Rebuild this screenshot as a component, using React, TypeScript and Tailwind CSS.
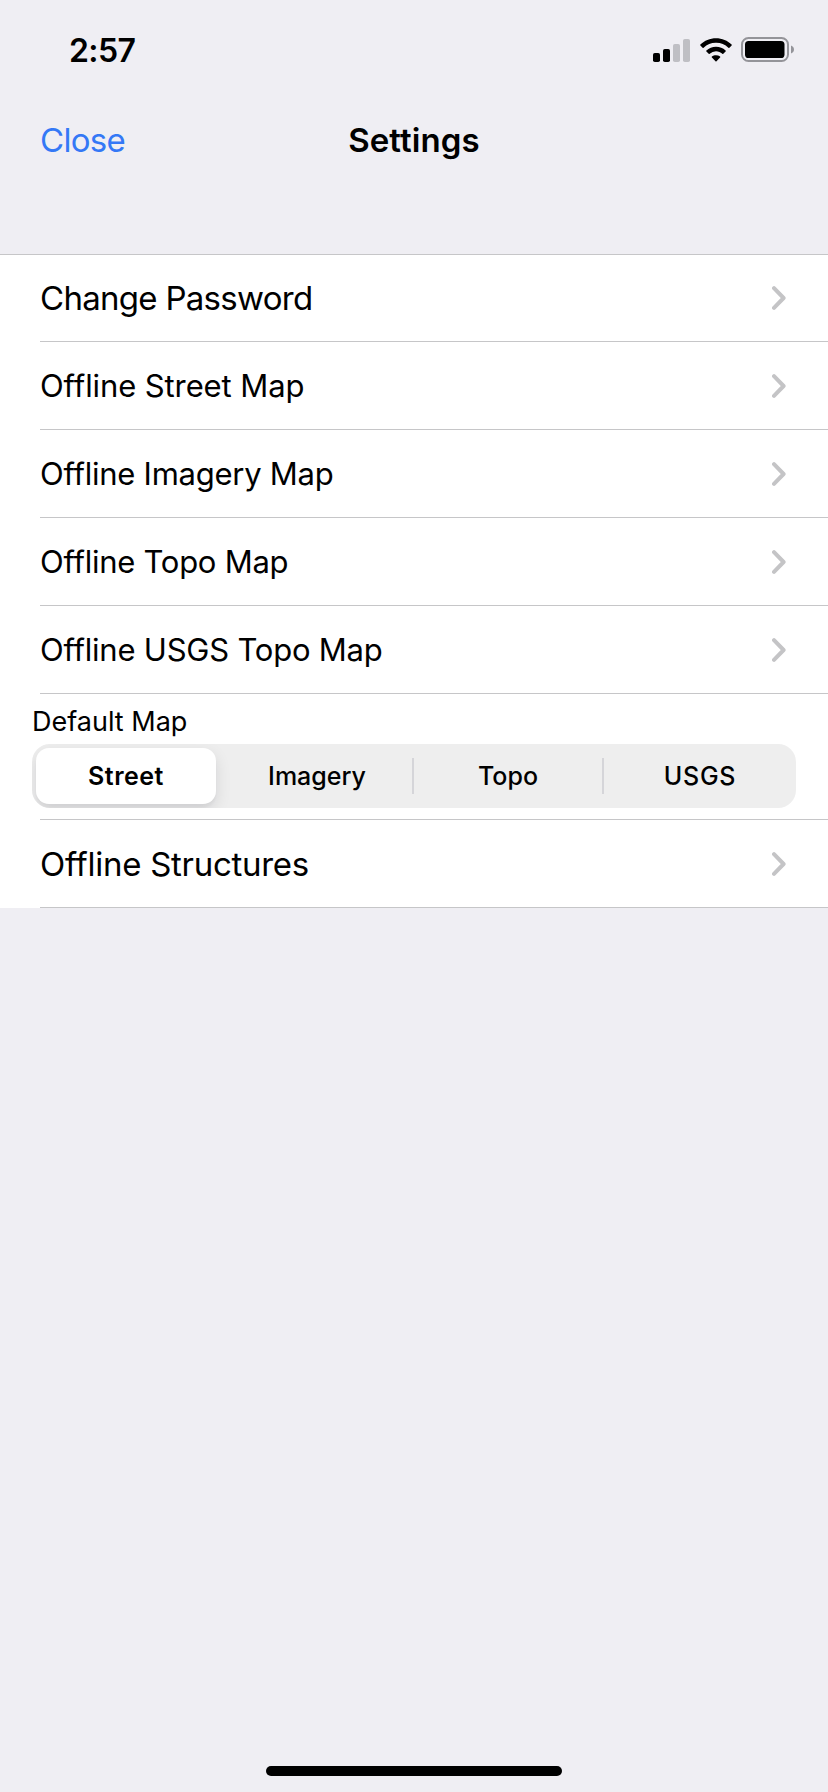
import React from "react";

/* ---------- Icons ---------- */

const SignalIcon = () => (
  <svg width="37" height="24" viewBox="0 0 37 24">
    <rect x="0" y="15" width="7" height="9" rx="1.8" fill="#000" />
    <rect x="10" y="11" width="7" height="13" rx="1.8" fill="#000" />
    <rect x="20" y="6" width="7" height="18" rx="1.8" fill="#bfbfc4" />
    <rect x="30" y="1" width="7" height="23" rx="1.8" fill="#bfbfc4" />
  </svg>
);

const WifiIcon = () => (
  <svg width="32" height="24" viewBox="0 0 32 24">
    <path d="M16 0.2C10 0.2 4.4 2.5 0.4 6.5a.7.7 0 0 0 0 1l2.2 2.2a.7.7 0 0 0 1 0A17.6 17.6 0 0 1 16 4.8a17.6 17.6 0 0 1 12.4 4.9a.7.7 0 0 0 1 0l2.2-2.2a.7.7 0 0 0 0-1C27.6 2.5 22 .2 16 .2Z" />
    <path d="M16 8.7c-3.7 0-7 1.4-9.6 3.7a.7.7 0 0 0 0 1l2.3 2.3a.7.7 0 0 0 1 0A9.4 9.4 0 0 1 16 13.2c2.400 0 4.600.9 6.300 2.500a.7.7 0 0 0 1 0l2.300-2.300a.7.7 0 0 0 0-1A14.200 14.200 0 0 0 16 8.700Z" />
    <path d="M16 17.200c-1.600 0-3 .5-4.100 1.400a.7.7 0 0 0 0 1l3.600 3.700a.7.7 0 0 0 1 0l3.600-3.700a.7.7 0 0 0 0-1A6.600 6.600 0 0 0 16 17.200Z" />
  </svg>
);

const BatteryIcon = () => (
  <svg width="53" height="25" viewBox="0 0 53 25">
    <rect x="1" y="1" width="46" height="23" rx="6.5" fill="none" stroke="#949499" strokeWidth="2" />
    <rect x="4" y="4" width="39.5" height="17" rx="3.6" fill="#000" />
    <path d="M50 8.500c1.800.7 3 2.200 3 4s-1.200 3.300-3 4Z" fill="#949499" />
  </svg>
);

const Chevron = () => (
  <svg width="14" height="24" viewBox="0 0 14 24">
    <path
      d="M2 2.200 11.600 12 2 21.800"
      fill="none"
      stroke="#c4c4c6"
      strokeWidth="4"
      strokeLinecap="round"
      strokeLinejoin="round"
    />
  </svg>
);

/* ---------- Header ---------- */

const StatusBar = () => (
  <div className="flex h-[99px] items-center justify-between pl-[69px] pr-[34px]">
    <span className="pt-0.5 text-[32px] font-semibold tracking-[-0.6px]">2:57</span>
    <div className="flex items-center">
      <SignalIcon />
      <div className="ml-[10px] mr-[9px]">
        <WifiIcon />
      </div>
      <BatteryIcon />
    </div>
  </div>
);

const NavBar = () => (
  <header className="grid h-[82px] grid-cols-3 items-center px-10 pt-0.5">
    <button className="justify-self-start text-[33px] tracking-[-0.7px] text-[#3478f6]">
      Close
    </button>
    <h1 className="justify-self-center text-[33px] font-semibold tracking-[0.1px]">Settings</h1>
  </header>
);

/* ---------- List rows ---------- */

const Row = ({ label, textClass, first = false }: { label: string; textClass: string; first?: boolean }) => (
  <div className="pl-10">
    <div
      className={`flex items-center justify-between border-b border-[#c6c6c8] pr-[42px] ${
        first ? "h-[87px]" : "h-[88px]"
      }`}
    >
      <span className={`pt-0.5 ${textClass}`}>{label}</span>
      <Chevron />
    </div>
  </div>
);

const Segment = ({ label }: { label: string }) => (
  <button className="h-14 w-[180px] pt-0.5 text-center text-[25px] font-[450]">{label}</button>
);

const DefaultMap = () => (
  <div>
    <div className="px-8 pt-2">
      <p className="text-[27px] leading-10">Default Map</p>
      <div className="mt-0.5 flex h-16 items-center overflow-hidden rounded-[18px] bg-[#eeeeee] p-1">
        <button className="h-14 w-[180px] rounded-[13px] bg-white pt-0.5 text-center text-[25px] font-semibold tracking-[0.5px] shadow-[0_6px_16px_rgba(0,0,30,0.11),0_4px_2px_rgba(0,0,0,0.03)]">
          Street
        </button>
        <div className="w-[11px]" />
        <Segment label="Imagery" />
        <div className="ml-[5px] mr-1 h-9 w-0.5 bg-[#d5d5d9]" />
        <Segment label="Topo" />
        <div className="ml-1 mr-[6px] h-9 w-0.5 bg-[#d5d5d9]" />
        <button className="h-14 w-[180px] pt-0.5 text-center text-[25px] font-[450] tracking-[0.7px]">
          USGS
        </button>
      </div>
    </div>
    <div className="ml-10 mt-[11px] h-px bg-[#c6c6c8]" />
  </div>
);

/* ---------- Screen ---------- */

export default function App() {
  return (
    <div className="flex h-[1792px] w-[828px] flex-col bg-[#efeef3] font-['Inter',sans-serif] text-black">
      <StatusBar />
      <NavBar />

      <main className="mt-[73px] border-t border-[#c6c6c8] bg-white">
        <Row first label="Change Password" textClass="text-[33px] tracking-[-0.71px]" />
        <Row label="Offline Street Map" textClass="text-[31px] tracking-[-0.1px]" />
        <Row label="Offline Imagery Map" textClass="text-[31px] tracking-[-0.25px]" />
        <Row label="Offline Topo Map" textClass="text-[31px] tracking-[-0.26px]" />
        <Row label="Offline USGS Topo Map" textClass="text-[31px] tracking-[-0.22px]" />
        <DefaultMap />
        <Row label="Offline Structures" textClass="text-[33px] tracking-[-0.28px]" />
      </main>

      {/* Home indicator */}
      <div className="mb-4 mt-auto h-[10px] w-[296px] self-center rounded-full bg-black" />
    </div>
  );
}
